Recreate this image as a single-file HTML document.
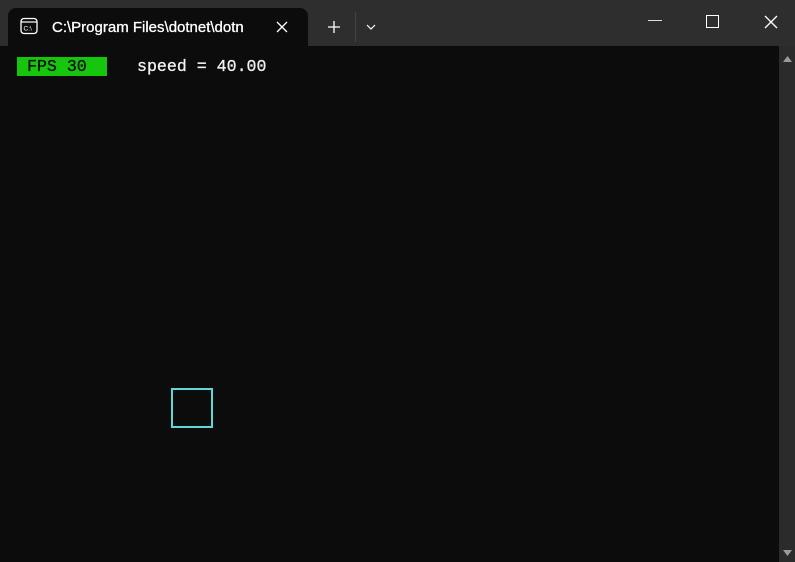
<!DOCTYPE html>
<html><head><style>
body{margin:0;width:795px;height:562px;background:#2e2e2e;overflow:hidden;position:relative;font-family:"Liberation Sans",sans-serif}
.tab{position:absolute;left:8px;top:8px;width:300px;height:40px;background:#0c0c0c;border-radius:8px 8px 0 0}
.title{position:absolute;left:52px;top:19px;color:#fff;font-size:15px;-webkit-text-stroke:0.3px #fff}
.content{position:absolute;left:0;top:46px;width:779px;height:516px;background:#0c0c0c}
.sb{position:absolute;left:779px;top:46px;width:16px;height:516px;background:#2b2b2b}
.mono{font-family:"Liberation Mono",monospace;font-size:16.6px;position:absolute;top:57px;line-height:19px}
</style></head><body>
<div class="tab"></div>
<svg style="position:absolute;left:20px;top:17px" width="18" height="18" viewBox="0 0 18 18"><rect x="1" y="1.5" width="16" height="15" rx="3" fill="none" stroke="#fff" stroke-width="1.3"/><line x1="1" y1="5" x2="17" y2="5" stroke="#fff" stroke-width="1.2"/><text x="3.5" y="13.5" font-size="6.5" fill="#fff" font-family="Liberation Sans">C:\</text></svg>
<div class="title">C:\Program Files\dotnet\dotn</div>
<svg style="position:absolute;left:276px;top:21px" width="12" height="12"><path d="M1 1L11 11M11 1L1 11" stroke="#fff" stroke-width="1.3"/></svg>
<svg style="position:absolute;left:327px;top:20px" width="14" height="14"><path d="M7 1V13M1 7H13" stroke="#fff" stroke-width="1.3"/></svg>
<div style="position:absolute;left:355px;top:12px;width:1px;height:30px;background:#444"></div>
<svg style="position:absolute;left:366px;top:24px" width="10" height="6"><path d="M1 1L5 5L9 1" stroke="#fff" fill="none" stroke-width="1.2"/></svg>
<div style="position:absolute;left:648px;top:20px;width:14px;height:1px;background:#ddd"></div>
<div style="position:absolute;left:706px;top:15px;width:11px;height:11px;border:1.3px solid #fff"></div>
<svg style="position:absolute;left:764px;top:15px" width="14" height="14"><path d="M1 1L13 13M13 1L1 13" stroke="#fff" stroke-width="1.3"/></svg>
<div class="content"></div>
<div class="sb"><svg style="position:absolute;left:4px;top:10px" width="9" height="6"><path d="M0 6L4.5 0L9 6Z" fill="#9a9a9a"/></svg><svg style="position:absolute;left:4px;top:504px" width="9" height="6"><path d="M0 0L4.5 6L9 0Z" fill="#9a9a9a"/></svg></div>
<div style="position:absolute;left:17px;top:57px;width:90px;height:19px;background:#16c60c"></div>
<div class="mono" style="left:27px;color:#0c0c0c;-webkit-text-stroke:0.3px #0c0c0c">FPS 30</div>
<div class="mono" style="left:137px;color:#f2f2f2;-webkit-text-stroke:0.3px #f2f2f2">speed = 40.00</div>
<div style="position:absolute;left:171px;top:388px;width:38px;height:36px;border:2px solid #61d6d6"></div>
</body></html>
